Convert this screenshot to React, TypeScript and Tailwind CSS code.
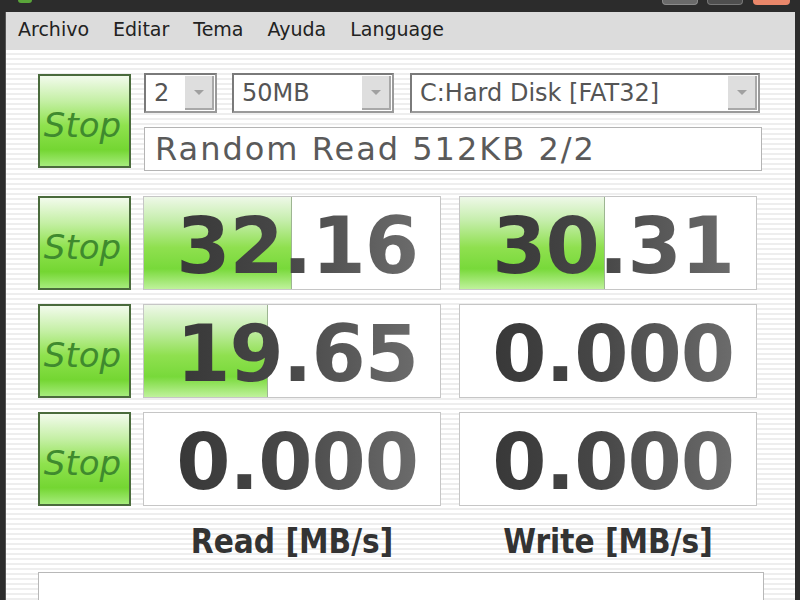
import React from 'react';

const stripes =
  'bg-[repeating-linear-gradient(to_bottom,#ffffff_0px,#ffffff_3px,#eeeeee_3px,#eeeeee_5px)]';

function StopButton() {
  return (
    <div className="w-[93px] h-[94px] shrink-0 border-2 border-[#4a6b3c] bg-[linear-gradient(to_bottom,#f2fbec_0%,#c4efa4_28%,#8fe24e_55%,#74d632_82%,#a6ec7c_100%)] flex items-center justify-center">
      <span className="italic text-[34px] leading-none text-[#3f8a2e] font-['DejaVu_Sans',sans-serif] -ml-[4px] mt-[8px]">
        Stop
      </span>
    </div>
  );
}

function Combo({ value, width }: { value: string; width: string }) {
  return (
    <div
      className={`${width} h-[40px] border-2 border-[#9a9a9a] border-t-[#7a7a7a] border-l-[#7a7a7a] bg-white flex items-center`}
    >
      <span className="flex-1 pl-[8px] text-[24px] leading-none text-[#555555] font-['DejaVu_Sans',sans-serif] whitespace-nowrap">
        {value}
      </span>
      <div className="w-[29px] h-[34px] mr-[1px] bg-[#dedede] border-r-2 border-b-2 border-[#a8a8a8] flex items-center justify-center">
        <svg width="12" height="7" viewBox="0 0 12 7">
          <path d="M1 1 L11 1 L6 6 Z" fill="#a0a0a0" />
        </svg>
      </div>
    </div>
  );
}

function ResultCell({ value, fill }: { value: string; fill: number }) {
  return (
    <div className="relative w-[298px] h-[94px] shrink-0 bg-white border border-[#c6c6c6] flex items-center justify-end pr-[22px] overflow-hidden">
      {fill > 0 && (
        <div
          className="absolute left-0 top-0 bottom-0 border-r border-[#9db592] bg-[linear-gradient(to_bottom,#eef8e8_0%,#c6eead_25%,#8fe04f_55%,#78d93a_78%,#bff29c_100%)]"
          style={{ width: `${fill}%` }}
        />
      )}
      <span className="relative mt-[6px] font-['DejaVu_Sans',sans-serif] font-bold text-[78px] leading-none tracking-[-1px] bg-[linear-gradient(to_right,#383838,#474747_45%,#6c6c6c)] bg-clip-text text-transparent">
        {value}
      </span>
    </div>
  );
}

function Row({ read, write }: { read: [string, number]; write: [string, number] }) {
  return (
    <div className="flex items-start">
      <StopButton />
      <div className="ml-[12px]">
        <ResultCell value={read[0]} fill={read[1]} />
      </div>
      <div className="ml-[18px]">
        <ResultCell value={write[0]} fill={write[1]} />
      </div>
    </div>
  );
}

export default function App() {
  const menu = ['Archivo', 'Editar', 'Tema', 'Ayuda', 'Language'];

  return (
    <div className="w-[800px] h-[600px] overflow-hidden bg-[#2c2c2c] flex flex-col">
      {/* title bar */}
      <div className="h-[12px] shrink-0 flex items-start">
        <div className="ml-[18px] w-[14px] h-[3px] rounded-b-full bg-[#5aa53a]" />
        <div className="flex-1" />
        <div className="w-[36px] h-[5px] rounded-b-[4px] bg-[#6a6a6a] border border-t-0 border-[#8a8a8a]" />
        <div className="ml-[9px] w-[36px] h-[5px] rounded-b-[4px] bg-[#4e4e4e] border border-t-0 border-[#777777]" />
        <div className="ml-[10px] mr-[10px] w-[37px] h-[5px] rounded-b-[4px] bg-[#e9876a]" />
      </div>

      {/* window body */}
      <div className="flex-1 flex flex-col ml-[5px] mr-[5px] border-l border-[#555555]">
        <div className="h-[38px] shrink-0 bg-[#dcdcdc] flex items-center pl-[12px] gap-[24px] font-['DejaVu_Sans',sans-serif] text-[19px] text-[#222222]">
          {menu.map((m) => (
            <span key={m} className="leading-none -mt-[3px]">
              {m}
            </span>
          ))}
        </div>

        <div className={`flex-1 ${stripes} pl-[32px] flex flex-col`}>
          {/* top controls */}
          <div className="flex items-start mt-[24px]">
            <StopButton />
            <div className="ml-[13px] -mt-[1px] flex flex-col">
              <div className="flex items-center">
                <Combo value="2" width="w-[73px]" />
                <div className="ml-[15px]">
                  <Combo value="50MB" width="w-[162px]" />
                </div>
                <div className="ml-[16px]">
                  <Combo value="C:Hard Disk [FAT32]" width="w-[350px]" />
                </div>
              </div>
              <div className="mt-[14px] w-[618px] h-[44px] bg-white border border-[#b4b4b4] flex items-center pl-[10px]">
                <span className="text-[32px] leading-none tracking-[2px] text-[#5a5a5a] font-['DejaVu_Sans',sans-serif] whitespace-nowrap">
                  Random Read 512KB 2/2
                </span>
              </div>
            </div>
          </div>

          {/* results */}
          <div className="mt-[25px] flex flex-col gap-[14px]">
            <Row read={['32.16', 50]} write={['30.31', 49]} />
            <Row read={['19.65', 42]} write={['0.000', 0]} />
            <Row read={['0.000', 0]} write={['0.000', 0]} />
          </div>

          {/* labels */}
          <div className="flex mt-[16px] h-[38px] items-center font-['DejaVu_Sans_Condensed','DejaVu_Sans',sans-serif] font-bold text-[33px] leading-none text-[#333333]">
            <div className="w-[93px]" />
            <div className="ml-[12px] w-[298px] text-center">Read [MB/s]</div>
            <div className="ml-[18px] w-[298px] text-center">Write [MB/s]</div>
          </div>

          <div className="mt-[12px] w-[726px] flex-1 bg-white border border-[#b8b8b8] border-b-0" />
        </div>
      </div>
    </div>
  );
}
